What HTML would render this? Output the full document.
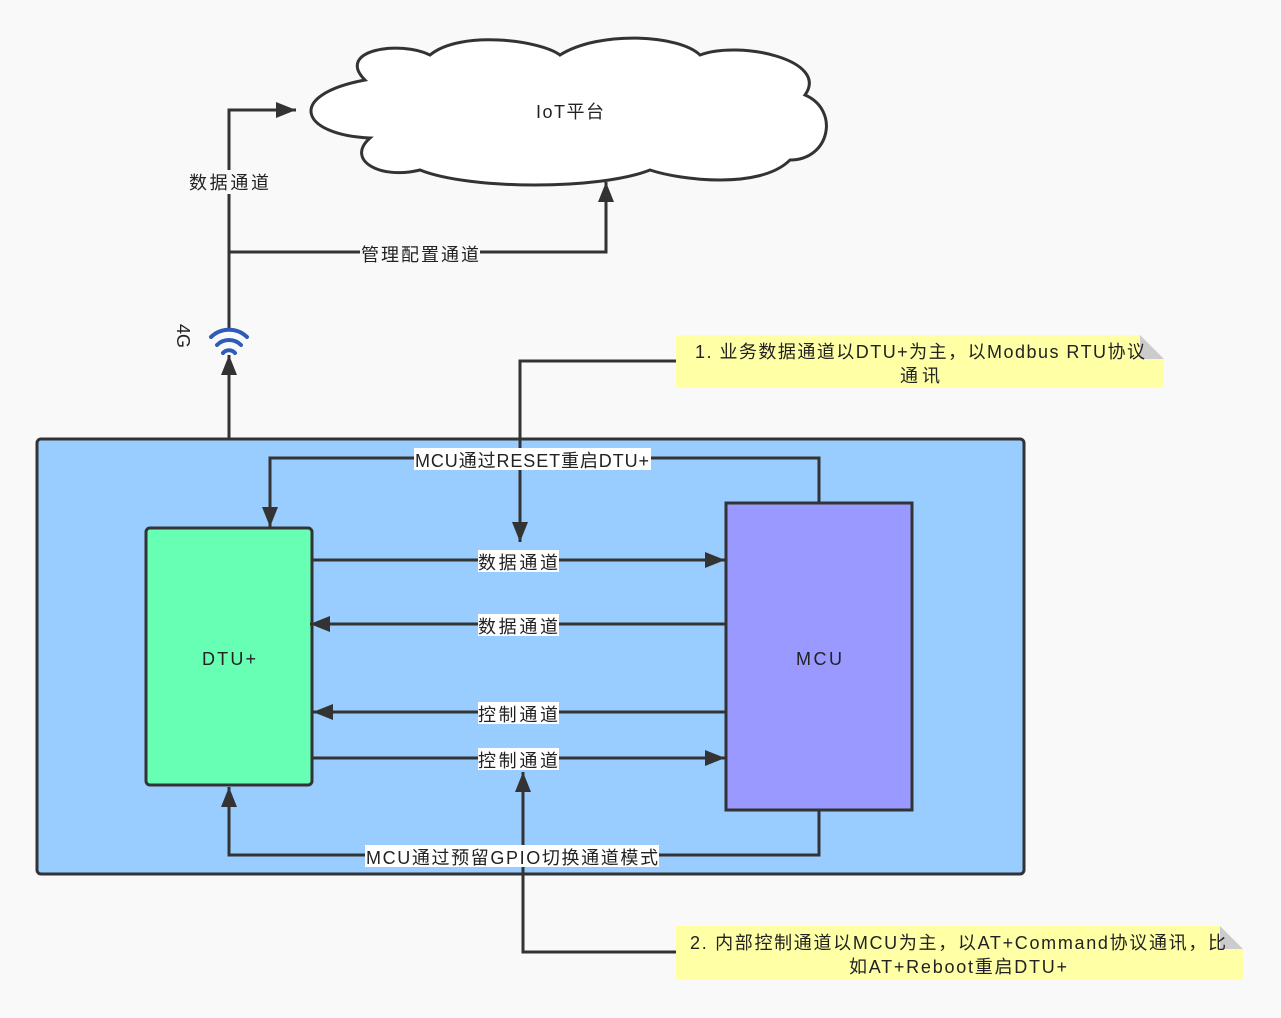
<!DOCTYPE html>
<html><head><meta charset="utf-8"><style>
html,body{margin:0;padding:0;background:#f9f9f9}
svg{display:block}
text{font-family:"Liberation Sans","Noto Sans CJK SC",sans-serif;font-size:18px;fill:#222}
</style></head><body>
<svg width="1281" height="1018" viewBox="0 0 1281 1018" xmlns="http://www.w3.org/2000/svg">
<defs>
<marker id="b" viewBox="0 0 20 16" markerWidth="22" markerHeight="16" refX="20" refY="8" orient="auto" markerUnits="userSpaceOnUse"><path d="M0,0 L20,8 L0,16 Z" fill="#333"/></marker></defs>
<rect width="1281" height="1018" fill="#f9f9f9"/>
<path d="M365,80 C335,50 400,40 430,55 C460,30 540,40 560,55 C600,30 680,35 700,55 C740,40 830,60 805,95 C840,110 830,160 790,160 C760,190 680,180 650,170 C600,190 470,190 420,170 C380,180 345,160 370,138 C300,135 285,95 365,80 Z" fill="#fff" stroke="#333" stroke-width="3"/>
<text x="570" y="118" text-anchor="middle" textLength="68">IoT平台</text>
<g stroke="#333" stroke-width="3" fill="none">
<path d="M229,330 V110 H296" marker-end="url(#b)"/>
<path d="M229,252 H606 V182" marker-end="url(#b)"/>
<path d="M229,527 V355" marker-end="url(#b)"/>
</g>
<rect x="188" y="170" width="82" height="24" fill="#f9f9f9"/>
<text x="229" y="189" text-anchor="middle" textLength="80">数据通道</text>
<rect x="360" y="242" width="120" height="22" fill="#f9f9f9"/>
<text x="420" y="261" text-anchor="middle" textLength="118">管理配置通道</text>
<g stroke="#2e5bb8" stroke-width="4" fill="none" stroke-linecap="round">
<path d="M211,337 A26,26 0 0 1 247,337"/>
<path d="M217,345 A17,17 0 0 1 241,345"/>
<path d="M223,353 A8,8 0 0 1 235,353"/>
</g>
<text x="0" y="0" transform="translate(177,324) rotate(90)">4G</text>
<rect x="37" y="439" width="987" height="435" rx="4" fill="#99ccff" stroke="#333" stroke-width="3"/>
<rect x="146" y="528" width="166" height="257" rx="4" fill="#66ffb3" stroke="#333" stroke-width="3"/>
<text x="229" y="665" text-anchor="middle" textLength="54">DTU+</text>
<rect x="726" y="503" width="186" height="307" fill="#9999ff" stroke="#333" stroke-width="3"/>
<text x="819" y="665" text-anchor="middle" textLength="46">MCU</text>
<g stroke="#333" stroke-width="3" fill="none">
<path d="M819,502 V458 H270 V527" marker-end="url(#b)"/>
<path d="M676,361 H520 V542" marker-end="url(#b)"/>
<path d="M313,560 H725" marker-end="url(#b)"/>
<path d="M725,624 H310" marker-end="url(#b)"/>
<path d="M725,712 H313" marker-end="url(#b)"/>
<path d="M313,758 H725" marker-end="url(#b)"/>
<path d="M819,811 V855 H229 V787" marker-end="url(#b)"/>
<path d="M676,952 H523 V772" marker-end="url(#b)"/>
</g>
<g fill="#fff">
<rect x="414" y="448" width="237" height="22"/>
<rect x="478" y="550" width="81" height="22"/>
<rect x="478" y="614" width="81" height="22"/>
<rect x="478" y="702" width="81" height="22"/>
<rect x="478" y="748" width="81" height="22"/>
<rect x="365" y="845" width="294" height="22"/>
</g>
<text x="532" y="467" text-anchor="middle" textLength="234">MCU通过RESET重启DTU+</text>
<text x="518" y="569" text-anchor="middle" textLength="80">数据通道</text>
<text x="518" y="633" text-anchor="middle" textLength="80">数据通道</text>
<text x="518" y="721" text-anchor="middle" textLength="80">控制通道</text>
<text x="518" y="767" text-anchor="middle" textLength="80">控制通道</text>
<text x="512" y="864" text-anchor="middle" textLength="292">MCU通过预留GPIO切换通道模式</text>
<path d="M676,335 H1140 L1164,359 V388 H676 Z" fill="#ffffa6"/>
<path d="M1140,335 L1164,359 H1140 Z" fill="#ccc"/>
<text x="920" y="358" text-anchor="middle" textLength="450">1. 业务数据通道以DTU+为主，以Modbus RTU协议</text>
<text x="920" y="382" text-anchor="middle" textLength="40">通讯</text>
<path d="M676,926 H1220 L1243,949 V980 H676 Z" fill="#ffffa6"/>
<path d="M1220,926 L1243,949 H1220 Z" fill="#ccc"/>
<text x="958" y="949" text-anchor="middle" textLength="536">2. 内部控制通道以MCU为主，以AT+Command协议通讯，比</text>
<text x="958" y="973" text-anchor="middle" textLength="218">如AT+Reboot重启DTU+</text>
</svg>
</body></html>
